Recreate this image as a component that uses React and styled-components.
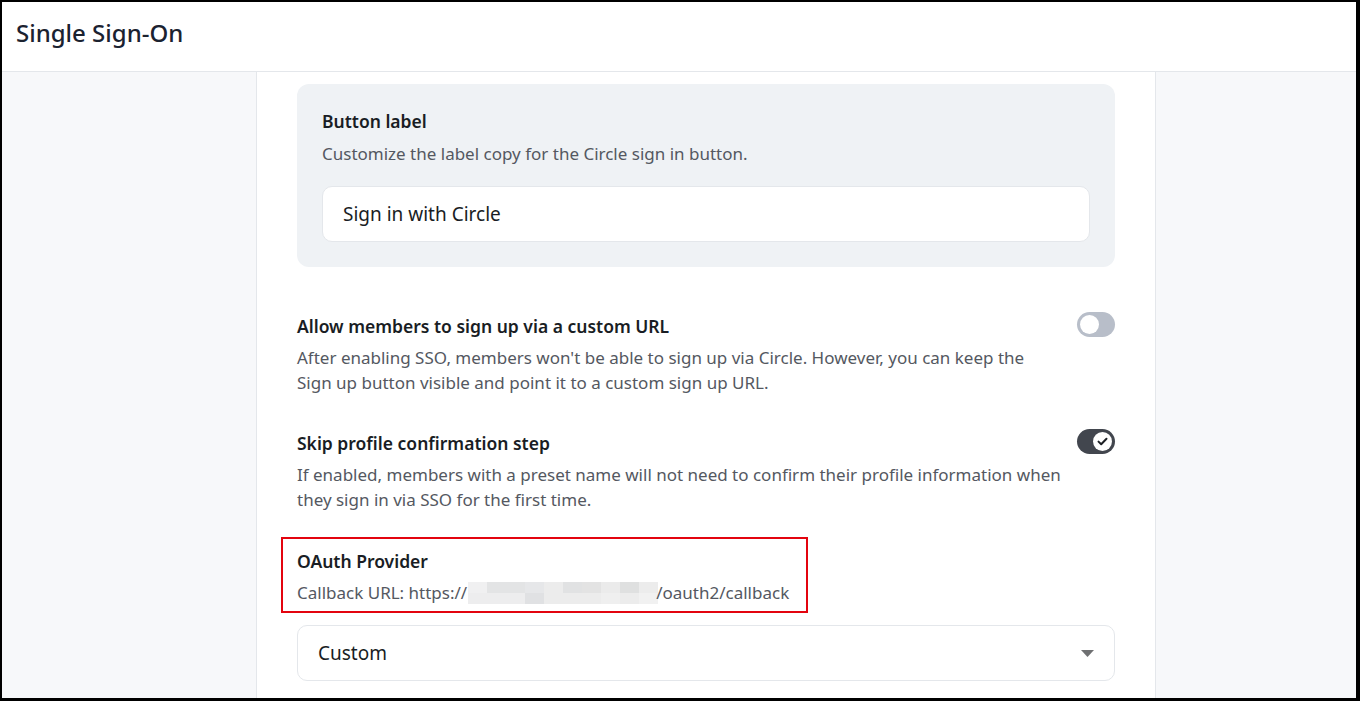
import styled, { createGlobalStyle } from 'styled-components';

const GlobalStyle = createGlobalStyle`
  html, body {
    margin: 0;
    padding: 0;
  }
  body {
    font-family: "Noto Sans", "Open Sans", sans-serif;
    color: #191d24;
    background: #ffffff;
  }
  * {
    box-sizing: border-box;
  }
`;

const redactTop = ['#f0f0f1', '#e3e4e5', '#e3e4e5', '#e6e7e9', '#ececec', '#e1e2e3', '#e3e3e3', '#ebebeb', '#dfe0e0', '#ececec'];
const redactBottom = ['#ededee', '#ededee', '#ededee', '#e0e1e3', '#ececec', '#ececec', '#ececec', '#efefef', '#ececec', '#f1f1f1'];

const CheckIcon = () => (
  <svg width="11" height="9" viewBox="0 0 11 9" fill="none">
    <path d="M1.5 4.6 4.2 7.2 9.5 1.8" stroke="#1c1f24" strokeWidth="2" strokeLinecap="round" strokeLinejoin="round" />
  </svg>
);

const CaretIcon = () => (
  <svg width="13" height="7" viewBox="0 0 13 7">
    <path d="M0 0h13L6.5 7z" fill="#6f7072" />
  </svg>
);

const SettingRow = ({ title, children, enabled }) => (
  <Row>
    <RowText>
      <Title>{title}</Title>
      <Desc>{children}</Desc>
    </RowText>
    <Toggle $on={enabled}>
      <Knob $on={enabled}>{enabled && <CheckIcon />}</Knob>
    </Toggle>
  </Row>
);

const App = () => {
  return (
    <Frame>
      <GlobalStyle />
      <Header>
        <PageTitle>Single Sign-On</PageTitle>
      </Header>
      <Body>
        <SidePanel />
        <Main>
          <Card>
            <Title>Button label</Title>
            <Desc>Customize the label copy for the Circle sign in button.</Desc>
            <TextInput>Sign in with Circle</TextInput>
          </Card>

          <SettingRow title="Allow members to sign up via a custom URL">
            After enabling SSO, members won't be able to sign up via Circle. However, you can keep the
            <br />
            Sign up button visible and point it to a custom sign up URL.
          </SettingRow>

          <SettingRow title="Skip profile confirmation step" enabled>
            If enabled, members with a preset name will not need to confirm their profile information when
            <br />
            they sign in via SSO for the first time.
          </SettingRow>

          <Provider>
            <Highlight />
            <Title>OAuth Provider</Title>
            <Desc>
              Callback URL: https://
              <Redacted>
                {redactTop.map((c, i) => (
                  <Cell key={`t${i}`} $shade={c} />
                ))}
                {redactBottom.map((c, i) => (
                  <Cell key={`b${i}`} $shade={c} />
                ))}
              </Redacted>
              /oauth2/callback
            </Desc>
          </Provider>

          <Select>
            <span>Custom</span>
            <CaretIcon />
          </Select>
        </Main>
        <SidePanel />
      </Body>
    </Frame>
  );
};

export default App;

const Frame = styled.div`
  width: 1360px;
  height: 701px;
  overflow: hidden;
  display: flex;
  flex-direction: column;
  border-style: solid;
  border-color: #000000;
  border-width: 2px 4px 3px 2px;
  background: #ffffff;
`;

const Header = styled.header`
  height: 70px;
  flex-shrink: 0;
  display: flex;
  align-items: center;
  padding: 0 0 7px 14px;
  border-bottom: 1px solid #e4e7eb;
`;

const PageTitle = styled.h1`
  margin: 0;
  font-size: 24px;
  line-height: 30px;
  font-weight: 500;
  color: #1b2230;
`;

const Body = styled.div`
  flex: 1;
  display: grid;
  grid-template-columns: 254px 900px 1fr;
  min-height: 0;
`;

const SidePanel = styled.div`
  background: #f7f8fa;
`;

const Main = styled.main`
  border-left: 1px solid #e4e7eb;
  border-right: 1px solid #e4e7eb;
  padding: 12px 40px 0;
`;

const Card = styled.section`
  background: #eff2f5;
  border-radius: 12px;
  padding: 25px;
`;

const Title = styled.h3`
  margin: 0;
  font-size: 17.5px;
  line-height: 25px;
  font-weight: 600;
  color: #191d24;
`;

const Desc = styled.p`
  margin: 7px 0 0;
  font-size: 17px;
  line-height: 25px;
  color: #545861;
`;

const TextInput = styled.div`
  margin-top: 20px;
  height: 56px;
  display: flex;
  align-items: center;
  padding: 0 20px;
  background: #ffffff;
  border: 1px solid #e4e7eb;
  border-radius: 10px;
  font-size: 19px;
  color: #191d24;
`;

const Row = styled.div`
  display: flex;
  justify-content: space-between;
  align-items: flex-start;
  gap: 24px;
  margin-top: 47px;

  & + & {
    margin-top: 36px;
  }

  ${Desc} {
    margin-top: 6px;
  }
`;

const RowText = styled.div`
  flex: 1;
  min-width: 0;
  white-space: nowrap;
`;

const Toggle = styled.div`
  width: 38px;
  height: 25px;
  flex-shrink: 0;
  margin-top: -2px;
  border-radius: 999px;
  padding: 3px;
  display: flex;
  justify-content: ${(p) => (p.$on ? 'flex-end' : 'flex-start')};
  background: ${(p) => (p.$on ? '#42464e' : '#b8bec9')};
`;

const Knob = styled.span`
  width: 19px;
  height: 19px;
  border-radius: 50%;
  background: #ffffff;
  display: flex;
  align-items: center;
  justify-content: center;
`;

const Provider = styled.section`
  position: relative;
  margin-top: 37px;

  ${Desc} {
    margin-top: 6px;
  }
`;

/* red callout drawn around the provider block */
const Highlight = styled.div`
  position: absolute;
  left: -16px;
  top: -12px;
  width: 527px;
  height: 76px;
  border: 2px solid #e3040f;
  pointer-events: none;
`;

const Redacted = styled.span`
  display: inline-grid;
  grid-template-columns: repeat(10, 19px);
  grid-template-rows: 11px 11px;
  vertical-align: middle;
  margin: -3px -2px 0 1px;
`;

const Cell = styled.span`
  background: ${(p) => p.$shade};
`;

const Select = styled.div`
  margin-top: 20px;
  height: 56px;
  display: flex;
  align-items: center;
  justify-content: space-between;
  padding: 0 20px 0 20px;
  border: 1px solid #e4e7eb;
  border-radius: 10px;
  font-size: 19px;
  color: #191d24;
`;
